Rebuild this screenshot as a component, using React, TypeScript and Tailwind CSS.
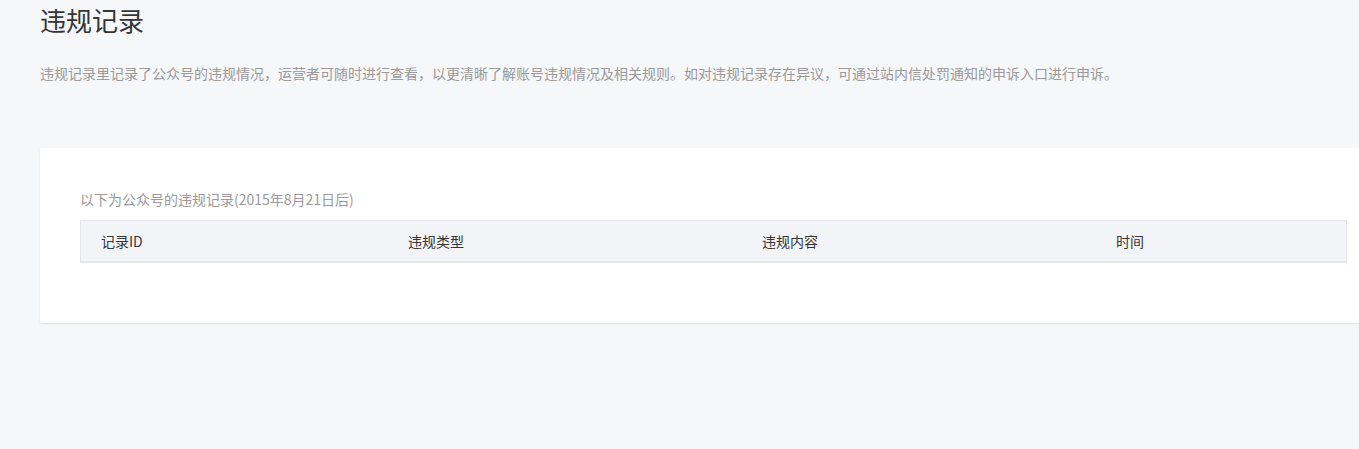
export default function App() {
    const cols = [
        { label: "记录ID", w: "w-[307px]" },
        { label: "违规类型", w: "w-[354px]" },
        { label: "违规内容", w: "w-[354px]" },
        { label: "时间", w: "flex-1" },
    ]
    return <div className="w-full h-[449px] overflow-hidden bg-[#f6f7f9] font-['Microsoft_YaHei','Noto_Sans_CJK_SC',sans-serif]">
        <div className="pl-10">
            <h2 className="text-[26px] leading-[40px] text-[#353535]">违规记录</h2>
            <p className="mt-[22px] text-[14px] leading-[22px] text-[#9a9a9a] whitespace-nowrap">违规记录里记录了公众号的违规情况，运营者可随时进行查看，以更清晰了解账号违规情况及相关规则。如对违规记录存在异议，可通过站内信处罚通知的申诉入口进行申诉。</p>
            <div className="mt-[64px] w-[1347px] bg-white rounded-[2px] shadow-[0_1px_2px_rgba(150,150,150,0.2)] pt-[39px] pb-[60px] px-10">
                <p className="text-[14px] leading-[24px] text-[#9a9a9a]">以下为公众号的违规记录(2015年8月21日后)</p>
                <div className="mt-[9px] flex h-[43px] items-center bg-[#f3f4f7] border border-[#e4e6eb] border-b-2">
                    {cols.map((c, idx) => (
                        <div key={`col-${idx}`} className={`${c.w} pl-5 text-[14px] text-[#353535]`}>{c.label}</div>
                    ))}
                </div>
            </div>
        </div>
    </div>
}
